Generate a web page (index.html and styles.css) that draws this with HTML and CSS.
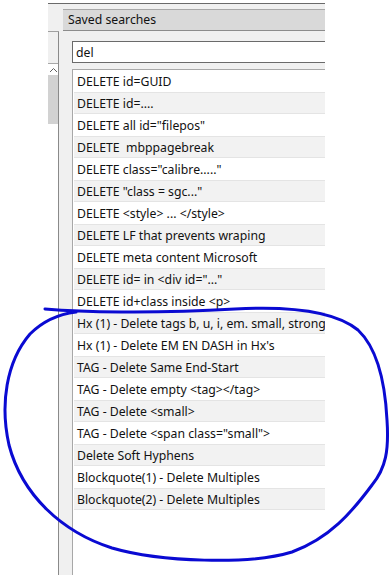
FILE: index.html
```html
<!DOCTYPE html>
<html>
<head>
<meta charset="utf-8">
<link rel="stylesheet" href="styles.css">
</head>
<body>
<div class="app">
  <div class="side">
    <div class="side-top"></div>
    <div class="side-gap"></div>
    <div class="scroll">
      <div class="scroll-up"><svg width="9" height="6" viewBox="0 0 9 6"><path d="M1 5 L4.5 1.5 L8 5" fill="none" stroke="#606060" stroke-width="1"/></svg></div>
      <div class="scroll-thumb"></div>
    </div>
  </div>
  <div class="panel">
    <div class="header">Saved searches</div>
    <div class="search">del</div>
    <div class="list">
      <div class="row">DELETE id=GUID</div>
      <div class="row">DELETE id=....</div>
      <div class="row">DELETE all id="filepos"</div>
      <div class="row">DELETE  mbppagebreak</div>
      <div class="row">DELETE class="calibre....."</div>
      <div class="row">DELETE "class = sgc..."</div>
      <div class="row">DELETE &lt;style&gt; ... &lt;/style&gt;</div>
      <div class="row">DELETE LF that prevents wraping</div>
      <div class="row">DELETE meta content Microsoft</div>
      <div class="row">DELETE id= in &lt;div id="..."</div>
      <div class="row">DELETE id+class inside &lt;p&gt;</div>
      <div class="row">Hx (1) - Delete tags b, u, i, em. small, strong</div>
      <div class="row">Hx (1) - Delete EM EN DASH in Hx's</div>
      <div class="row">TAG - Delete Same End-Start</div>
      <div class="row">TAG - Delete empty &lt;tag&gt;&lt;/tag&gt;</div>
      <div class="row">TAG - Delete &lt;small&gt;</div>
      <div class="row">TAG - Delete &lt;span class="small"&gt;</div>
      <div class="row">Delete Soft Hyphens</div>
      <div class="row">Blockquote(1) - Delete Multiples</div>
      <div class="row">Blockquote(2) - Delete Multiples</div>
    </div>
  </div>
</div>
<svg class="annot" width="391" height="575" viewBox="0 0 391 575">
  <path d="M45 309 C 80 312, 150 314, 235 309 C 290 306, 335 311, 358 330 C 377 348, 385 380, 387 420 C 389 450, 386 468, 372 485 C 352 512, 330 538, 292 552 C 250 565, 160 562, 112 548 C 62 532, 22 495, 9 445 C 0 405, 6 362, 30 334 C 44 320, 60 314, 76 312" fill="none" stroke="#0a0ad2" stroke-width="3" stroke-linecap="round" stroke-linejoin="round"/>
</svg>
</body>
</html>
```
FILE: styles.css
```css
html, body {
  margin: 0;
  padding: 0;
  background: #ffffff;
}
body {
  width: 391px;
  height: 575px;
  overflow: hidden;
  position: relative;
  font-family: "Noto Sans", "Open Sans", sans-serif;
  font-size: 12.25px;
  color: #111;
}
.app {
  display: flex;
  margin: 3px 0 0 48px;
  width: 277px;
  height: 572px;
  border-top: 1px solid #6a6a6a;
  box-sizing: border-box;
}
.side {
  width: 11px;
  display: flex;
  flex-direction: column;
  border-right: 1px solid #8a8a8a;
  box-sizing: border-box;
}
.side-top {
  height: 27px;
  background: #f0f0f0;
  border-bottom: 1px solid #a0a0a0;
  margin-right: -1px;
}
.side-gap {
  height: 31px;
  background: #f0f0f0;
}
.scroll {
  flex: 1;
  border-top: 1px solid #a8a8a8;
  background: #ffffff;
}
.scroll-up {
  height: 11px;
  display: flex;
  align-items: center;
  justify-content: center;
}
.scroll-thumb {
  height: 49px;
  background: #d2d2d2;
}
.panel {
  flex: 1;
  background: #f0f0f0;
  display: flex;
  flex-direction: column;
  padding-top: 5px;
  overflow: hidden;
}
.header {
  margin-left: 4px;
  height: 20px;
  line-height: 20px;
  padding-left: 5px;
  background: #d9d9d9;
  border-top: 1px solid #a8a8a8;
  border-bottom: 1px solid #8c8c8c;
}
.search {
  margin: 10px 0 0 13px;
  height: 20px;
  line-height: 21px;
  padding-left: 3px;
  background: #ffffff;
  border-top: 1px solid #6a6a6a;
  border-left: 1px solid #6a6a6a;
  border-bottom: 1px solid #6a6a6a;
}
.list {
  flex: 1;
  margin: 6px 0 0 13px;
  padding: 0 0 0 1px;
  background: #ffffff;
  border-top: 1px solid #a8a8a8;
  border-left: 1px solid #a8a8a8;
  overflow: hidden;
}
.row {
  height: 22px;
  line-height: 23px;
  padding-left: 3px;
  white-space: pre;
  overflow: hidden;
  box-sizing: border-box;
}
.row:nth-child(even) {
  background: #f2f2f2;
  border-top: 1px solid #e4e4e4;
  border-bottom: 1px solid #e4e4e4;
  line-height: 21px;
}
.annot {
  position: absolute;
  left: 0;
  top: 0;
  pointer-events: none;
}
```
